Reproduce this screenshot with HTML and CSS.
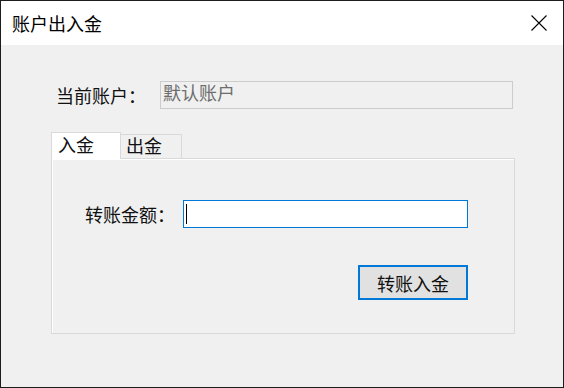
FILE: index.html
```html
<!DOCTYPE html>
<html lang="zh-CN">
<head>
<meta charset="utf-8">
<title>账户出入金</title>
<link rel="stylesheet" href="styles.css">
</head>
<body>
<div class="window">
  <div class="titlebar">
    <span class="title">账户出入金</span>
    <svg class="close" width="16" height="16" viewBox="0 0 16 16"><path d="M0.5 0.5 L15.5 15.5 M15.5 0.5 L0.5 15.5" stroke="#000" stroke-width="1.1" fill="none"/></svg>
  </div>
  <div class="content">
    <div class="account-row">
      <span class="label account-label">当前账户：</span>
      <div class="readonly">默认账户</div>
    </div>
    <div class="tabs">
      <div class="tab active">入金</div>
      <div class="tab">出金</div>
    </div>
    <div class="panel">
      <div class="form">
        <div class="amount-row">
          <span class="label amount-label">转账金额：</span>
          <div class="textbox"><span class="caret"></span></div>
        </div>
        <div class="btn-row">
          <div class="button">转账入金</div>
        </div>
      </div>
    </div>
  </div>
</div>
</body>
</html>
```
FILE: styles.css
```css
* { box-sizing: border-box; }
html, body { margin: 0; padding: 0; }
body {
  font-family: "Noto Sans CJK SC", "Noto Sans", sans-serif;
  background: #f0f0f0;
}
.window {
  width: 564px;
  height: 388px;
  border: 1px solid #1c1c1c;
  background: #f0f0f0;
  display: flex;
  flex-direction: column;
}
.titlebar {
  height: 44px;
  background: #ffffff;
  display: flex;
  align-items: center;
  justify-content: space-between;
  padding: 0 16px 0 11px;
  flex: none;
}
.title {
  font-size: 18px;
  line-height: 20px;
  color: #000;
}
.close { display: block; }
.content {
  flex: 1;
  padding: 36px 0 0 50px;
}
.label {
  font-size: 18px;
  line-height: 20px;
  color: #111;
  white-space: nowrap;
}
.account-row {
  display: flex;
  align-items: center;
  height: 28px;
  padding-left: 5px;
}
.account-label { width: 104px; }
.readonly {
  width: 353px;
  height: 28px;
  border: 1px solid #cccccc;
  background: #f0f0f0;
  color: #6d6d6d;
  font-size: 18px;
  line-height: 20px;
  padding: 0 0 0 2px;
}
.tabs {
  display: flex;
  align-items: flex-end;
  margin-top: 22px;
  height: 27px;
}
.tab {
  font-size: 18px;
  line-height: 20px;
  color: #111;
  border: 1px solid #d9d9d9;
  border-bottom: none;
  border-left: none;
  background: #f0f0f0;
  height: 24px;
  width: 61px;
  padding: 0 0 0 5px;
}
.tab.active {
  width: 70px;
  height: 27px;
  background: #ffffff;
  border-left: 1px solid #d9d9d9;
  padding: 1px 0 0 6px;
  position: relative;
  z-index: 1;
  margin-bottom: -1px;
}
.panel {
  width: 464px;
  height: 176px;
  border: 1px solid #d9d9d9;
  box-shadow: inset 1px 1px 0 #ffffff;
  background: #f0f0f0;
  padding: 41px 0 0 33px;
}
.form { width: 383px; }
.amount-row {
  display: flex;
  align-items: center;
  height: 28px;
}
.amount-label { width: 98px; }
.textbox {
  width: 285px;
  height: 28px;
  border: 1px solid #0078d7;
  background: #ffffff;
  padding: 3px 0 0 2px;
}
.caret {
  display: block;
  width: 1px;
  height: 20px;
  background: #000;
}
.btn-row {
  display: flex;
  justify-content: flex-end;
  margin-top: 37px;
}
.button {
  width: 110px;
  height: 35px;
  border: 2px solid #0078d7;
  background: #e1e1e1;
  font-size: 18px;
  line-height: 20px;
  color: #111;
  display: flex;
  align-items: center;
  justify-content: center;
}
```
